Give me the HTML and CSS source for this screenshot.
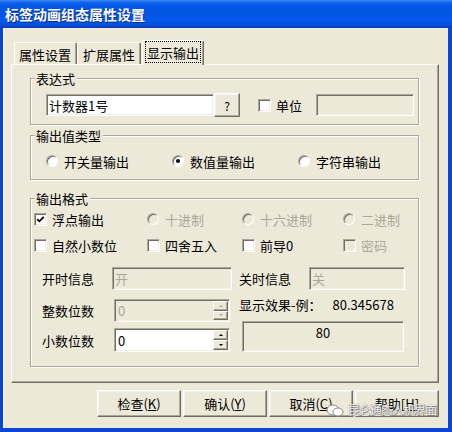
FILE: index.html
```html
<!DOCTYPE html>
<html>
<head>
<meta charset="utf-8">
<link rel="stylesheet" href="styles.css">
</head>
<body>
<div class="window">
  <div class="titlebar"><span class="title">标签动画组态属性设置</span></div>
  <div class="body">
    <div class="tabs">
      <div class="tab t1">属性设置</div>
      <div class="tab t2">扩展属性</div>
      <div class="tab active"><span class="focus">显示输出</span></div>
    </div>
    <div class="panel">
      <div class="group g1">
        <span class="legend">表达式</span>
        <div class="expr-row">
          <div class="field expr">计数器1号</div>
          <div class="btn qbtn">?</div>
          <div class="check unit-check"><span class="cb"></span><span>单位</span></div>
          <div class="field disabled unit"></div>
        </div>
      </div>
      <div class="group g2">
        <span class="legend">输出值类型</span>
        <div class="radio-row">
          <div class="check"><span class="rb"></span><span>开关量输出</span></div>
          <div class="check"><span class="rb on"></span><span>数值量输出</span></div>
          <div class="check"><span class="rb"></span><span>字符串输出</span></div>
        </div>
      </div>
      <div class="group g3">
        <span class="legend">输出格式</span>
        <div class="opt-row r1">
          <div class="check"><span class="cb"><svg width="9" height="9" viewBox="0 0 9 9"><path d="M1.2 4.2 L3.4 6.4 L7.8 1.8" fill="none" stroke="#000" stroke-width="1.7"/></svg></span><span>浮点输出</span></div>
          <div class="check dis"><span class="rb dis"></span><span>十进制</span></div>
          <div class="check dis"><span class="rb dis"></span><span>十六进制</span></div>
          <div class="check dis"><span class="rb dis"></span><span>二进制</span></div>
        </div>
        <div class="opt-row r2">
          <div class="check"><span class="cb"></span><span>自然小数位</span></div>
          <div class="check"><span class="cb"></span><span>四舍五入</span></div>
          <div class="check"><span class="cb"></span><span>前导0</span></div>
          <div class="check dis"><span class="cb dis"></span><span>密码</span></div>
        </div>
        <div class="lower">
          <div class="left-col">
            <div class="frow ra">
              <span class="flabel">开时信息</span>
              <div class="field disabled on-input">开</div>
            </div>
            <div class="frow rb-row">
              <span class="flabel">整数位数</span>
              <div class="field disabled spin">
                <span class="spin-val">0</span>
                <span class="spin-btns"><span class="sb up dis"></span><span class="sb down dis"></span></span>
              </div>
            </div>
            <div class="frow rc">
              <span class="flabel">小数位数</span>
              <div class="field spin">
                <span class="spin-val">0</span>
                <span class="spin-btns"><span class="sb up"></span><span class="sb down"></span></span>
              </div>
            </div>
          </div>
          <div class="right-col">
            <div class="frow ra">
              <span class="flabel">关时信息</span>
              <div class="field disabled off-input">关</div>
            </div>
            <div class="example"><span>显示效果-例：</span><span class="num">80.345678</span></div>
            <div class="field preview">80</div>
          </div>
        </div>
      </div>
    </div>
    <div class="buttons">
      <div class="btn">检查(<u>K</u>)</div>
      <div class="btn">确认(<u>Y</u>)</div>
      <div class="btn">取消(<u>C</u>)</div>
      <div class="btn">帮助[<u>H</u>]</div>
    </div>
  </div>
  <div class="watermark">
    <svg width="18" height="13" viewBox="0 0 18 13"><ellipse cx="7" cy="6" rx="6" ry="5" fill="#fff" stroke="#8a8a8a" stroke-width="1"/><ellipse cx="12" cy="8" rx="5" ry="4" fill="#fff" stroke="#8a8a8a" stroke-width="1"/></svg>
    <span class="wm-text">昆仑通态人机界面</span>
  </div>
</div>
</body>
</html>
```
FILE: styles.css
```css
html, body {
  margin: 0;
  padding: 0;
  background: #ece9d8;
}
body {
  font-family: "Noto Sans CJK SC", "Noto Sans", sans-serif;
  font-size: 13px;
  color: #000;
}
.window {
  position: relative;
  width: 452px;
  height: 432px;
  display: flex;
  flex-direction: column;
  background: #0b45d6;
  overflow: hidden;
}
.titlebar {
  flex: none;
  height: 28px;
  display: flex;
  align-items: center;
  padding-left: 5px;
  background: linear-gradient(180deg, #3d8ef6 0px, #1666ee 2px, #0559e6 5px, #0055e3 12px, #0558e9 20px, #0452dc 25px, #0a3fb8 27px, #0a3fb8 28px);
}
.title {
  color: #fff;
  font-weight: bold;
  font-size: 14px;
  line-height: 16px;
  text-shadow: 1px 1px 0 #0b2a8a;
}
.body {
  flex: 1;
  margin: 0 4px 4px 3px;
  background: #ece9d8;
  padding: 12px 9px 11px 8px;
  display: flex;
  flex-direction: column;
  box-shadow: inset 1px 0 0 #fff;
}
.tabs {
  height: 25px;
  margin-bottom: -1px;
  display: flex;
  align-items: flex-end;
  padding-left: 3px;
}
.tab {
  box-sizing: border-box;
  height: 22px;
  margin-bottom: 1px;
  border: 1px solid;
  border-color: #fff #716f64 transparent #fff;
  border-bottom: none;
  border-radius: 2px 2px 0 0;
  box-shadow: inset -1px 0 0 #aca899;
  display: flex;
  align-items: center;
  line-height: 15px;
  white-space: nowrap;
}
.t1 { padding: 1px 5px 0 4px; }
.t2 { padding: 1px 5px 0 5px; }
.tab.active {
  position: relative;
  z-index: 1;
  height: 25px;
  margin-bottom: 0;
  margin-left: 1px;
  padding: 0 2px;
  align-items: flex-start;
  background: #ece9d8;
}
.focus {
  box-sizing: border-box;
  height: 22px;
  padding: 0 1px;
  border: 1px dotted #000;
  display: flex;
  align-items: center;
}
.panel {
  box-sizing: border-box;
  width: 428px;
  border: 1px solid;
  border-color: #fff #716f64 #716f64 #fff;
  box-shadow: inset -1px -1px 0 #aca899;
  padding: 13px 19px 15px 18px;
  display: flex;
  flex-direction: column;
}
.group {
  border: 1px solid #aca899;
  box-shadow: inset 1px 1px 0 #fff, 1px 1px 0 #fff;
  display: flex;
  flex-direction: column;
}
.legend {
  align-self: flex-start;
  height: 15px;
  line-height: 15px;
  margin: -8px 0 0 4px;
  padding: 0 2px 0 1px;
  background: #ece9d8;
  white-space: nowrap;
}
.g1 { padding-bottom: 7px; }
.g2 { margin-top: 10px; padding-bottom: 10px; }
.g3 { margin-top: 18px; padding-bottom: 14px; }

.field {
  box-sizing: border-box;
  border: 1px solid;
  border-color: #aca899 #fff #fff #aca899;
  box-shadow: inset 1px 1px 0 #716f64, inset -1px -1px 0 #f1efe2;
  background: #fff;
  display: flex;
  align-items: center;
  padding: 0 2px;
  line-height: 15px;
  white-space: nowrap;
}
.field.disabled {
  background: #ece9d8;
  color: #aca899;
}
.btn {
  box-sizing: border-box;
  border: 1px solid;
  border-color: #fff #716f64 #716f64 #fff;
  box-shadow: inset -1px -1px 0 #aca899, inset 1px 1px 0 #f4f3ee;
  background: #ece9d8;
  display: flex;
  align-items: center;
  justify-content: center;
  white-space: nowrap;
}
.expr-row {
  margin-top: 7px;
  height: 24px;
  display: flex;
  align-items: center;
  padding-left: 15px;
}
.expr { width: 168px; height: 22px; }
.qbtn { width: 26px; height: 24px; font-size: 12px; }
.unit-check { margin-left: 18px; }
.unit { width: 98px; height: 22px; margin-left: 14px; }

.check {
  display: flex;
  align-items: center;
  gap: 5px;
  white-space: nowrap;
  line-height: 15px;
}
.check.dis { color: #aca899; }
.cb {
  box-sizing: border-box;
  flex: none;
  width: 13px;
  height: 13px;
  border: 1px solid;
  border-color: #aca899 #fff #fff #aca899;
  box-shadow: inset 1px 1px 0 #716f64, inset -1px -1px 0 #f1efe2;
  background: #fff;
  display: flex;
  align-items: center;
  justify-content: center;
}
.cb svg { display: block; }
.cb.dis { background: #ece9d8; }
.rb {
  box-sizing: border-box;
  flex: none;
  width: 12px;
  height: 12px;
  border-radius: 50%;
  border: 1px solid;
  border-color: #aca899 #fff #fff #aca899;
  box-shadow: inset 1px 1px 0 #716f64;
  background: #fff;
  display: flex;
  align-items: center;
  justify-content: center;
  margin-right: 1px;
}
.rb.on::after {
  content: "";
  width: 4px;
  height: 4px;
  border-radius: 50%;
  background: #000;
}
.rb.dis { background: #ece9d8; }

.radio-row {
  margin-top: 10px;
  height: 16px;
  padding-left: 15px;
  display: grid;
  grid-template-columns: 126px 126px auto;
  align-items: center;
}
.opt-row {
  height: 16px;
  padding-left: 3px;
  display: grid;
  grid-template-columns: 113px 95px 101px auto;
  align-items: center;
}
.r1 { margin-top: 5px; }
.r2 { margin-top: 10px; }

.lower {
  margin-top: 14px;
  margin-left: 11px;
  display: flex;
  gap: 7px;
}
.left-col {
  width: 190px;
  display: flex;
  flex-direction: column;
}
.frow {
  display: flex;
  align-items: center;
  height: 23px;
}
.rb-row { margin-top: 9px; }
.rc { margin-top: 6px; height: 24px; }
.flabel {
  width: 70px;
  flex: none;
  white-space: nowrap;
}
.on-input { width: 120px; height: 23px; }
.spin {
  width: 116px;
  margin-left: 2px;
  height: 100%;
  padding: 1px 1px 1px 2px;
  align-items: stretch;
}
.spin-val {
  flex: 1;
  display: flex;
  align-items: center;
  padding-left: 1px;
}
.spin-btns {
  width: 15px;
  display: flex;
  flex-direction: column;
}
.sb {
  flex: 1;
  box-sizing: border-box;
  border: 1px solid;
  border-color: #fff #716f64 #716f64 #fff;
  box-shadow: inset -1px -1px 0 #aca899;
  background: #ece9d8;
  display: flex;
  align-items: center;
  justify-content: center;
}
.sb.up::after {
  content: "";
  border-left: 2px solid transparent;
  border-right: 2px solid transparent;
  border-bottom: 2px solid #000;
}
.sb.down::after {
  content: "";
  border-left: 2px solid transparent;
  border-right: 2px solid transparent;
  border-top: 2px solid #000;
}
.sb.up.dis::after { border-bottom-color: #aca899; }
.sb.down.dis::after { border-top-color: #aca899; }

.right-col {
  display: flex;
  flex-direction: column;
}
.off-input { width: 96px; height: 23px; }
.example {
  margin-top: 7px;
  height: 15px;
  line-height: 15px;
  display: flex;
  white-space: nowrap;
}
.num { margin-left: 11px; }
.preview {
  margin-top: 9px;
  margin-left: 3px;
  width: 162px;
  height: 31px;
  background: #ece9d8;
  justify-content: center;
  align-items: flex-start;
  padding-top: 3px;
}

.buttons {
  margin-top: 7px;
  display: flex;
  justify-content: flex-end;
  gap: 2px;
}
.buttons .btn {
  width: 84px;
  height: 27px;
}
.buttons u { text-underline-offset: 1px; }

.watermark {
  position: absolute;
  left: 326px;
  top: 403px;
  display: flex;
  align-items: center;
  gap: 4px;
  pointer-events: none;
}
.wm-text {
  font-size: 12px;
  letter-spacing: -1px;
  line-height: 14px;
  color: rgba(255, 255, 255, 0.9);
  text-shadow: 0 0 1px #666, 1px 1px 1px #777;
}
```
